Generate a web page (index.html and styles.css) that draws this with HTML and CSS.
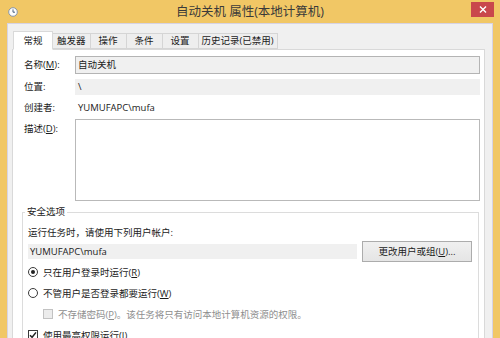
FILE: index.html
```html
<!DOCTYPE html>
<html>
<head>
<title>自动关机 属性(本地计算机)</title>
<link rel="stylesheet" href="styles.css">
</head>
<body>
<div class="window">
  <div class="titlebar">
    <svg class="app-icon" viewBox="0 0 10 10">
      <circle cx="5" cy="5" r="4.3" fill="#fdfdfd" stroke="#8795a8" stroke-width="1"/>
      <path d="M5 2.4V5.2H7" fill="none" stroke="#35506f" stroke-width="0.9"/>
    </svg>
    <div class="title">自动关机 属性(本地计算机)</div>
    <div class="close">
      <svg viewBox="0 0 8 7" width="8" height="7">
        <path d="M1 0.5L7 6.5M7 0.5L1 6.5" stroke="#fff" stroke-width="1.4"/>
      </svg>
    </div>
  </div>

  <div class="client">
    <div class="tabs">
      <div class="tab active">常规</div>
      <div class="tab">触发器</div>
      <div class="tab">操作</div>
      <div class="tab">条件</div>
      <div class="tab">设置</div>
      <div class="tab wide">历史记录(已禁用)</div>
    </div>

    <div class="panel">
      <div class="row">
        <span class="label">名称(<u>M</u>):</span>
        <div class="textbox">自动关机</div>
      </div>
      <div class="row row-gap">
        <span class="label">位置:</span>
        <div class="field">\</div>
      </div>
      <div class="row row-gap">
        <span class="label">创建者:</span>
        <div class="value">YUMUFAPC\mufa</div>
      </div>
      <div class="row row-desc">
        <span class="label">描述(<u>D</u>):</span>
        <div class="textarea"></div>
      </div>

      <fieldset class="group">
        <legend>安全选项</legend>
        <div class="intro">运行任务时，请使用下列用户帐户:</div>
        <div class="account">
          <div class="account-field">YUMUFAPC\mufa</div>
          <div class="btn">更改用户或组(<u>U</u>)...</div>
        </div>
        <div class="option">
          <span class="radio on"></span>
          <span>只在用户登录时运行(<u>R</u>)</span>
        </div>
        <div class="option">
          <span class="radio"></span>
          <span>不管用户是否登录都要运行(<u>W</u>)</span>
        </div>
        <div class="option sub disabled">
          <span class="check"></span>
          <span>不存储密码(<u>P</u>)。该任务将只有访问本地计算机资源的权限。</span>
        </div>
        <div class="option">
          <span class="check">
            <svg viewBox="0 0 8 8" width="8" height="8">
              <path d="M1 4.2L3.1 6.3L7 1.4" fill="none" stroke="#222" stroke-width="1.5"/>
            </svg>
          </span>
          <span>使用最高权限运行(<u>I</u>)</span>
        </div>
      </fieldset>
    </div>
  </div>
</div>
</body>
</html>
```

FILE: styles.css
```css
* {
  box-sizing: border-box;
}
body {
  margin: 0;
  font-family: "Open Sans", "Noto Sans CJK SC", sans-serif;
  font-size: 9.5px;
  color: #1b1b1b;
}
.window {
  width: 500px;
  height: 338px;
  background-color: #f1c765;
  display: flex;
  flex-direction: column;
  overflow: hidden;
}
.titlebar {
  height: 23px;
  flex: none;
  display: grid;
  grid-template-columns: 1fr auto 1fr;
  align-items: start;
}
.app-icon {
  width: 10px;
  height: 10px;
  margin: 7px 0 0 8px;
}
.title {
  font-size: 12.5px;
  line-height: 16px;
  padding-top: 4px;
  color: #3a3a3a;
}
.close {
  justify-self: end;
  width: 23px;
  height: 15px;
  margin: 2px 6px 0 0;
  background-color: #c9474c;
  display: flex;
  align-items: center;
  justify-content: center;
}
.client {
  flex: 1;
  margin: 0 7px;
  border: 1px solid #d7d3e3;
  border-bottom: none;
  background-color: #f0f0f0;
  padding: 7px 7px 0 4px;
  display: flex;
  flex-direction: column;
}
.tabs {
  display: flex;
  align-items: flex-end;
  padding-left: 1px;
}
.tab {
  height: 16px;
  line-height: 14px;
  min-width: 37px;
  padding: 0 4px;
  margin-left: -1px;
  text-align: center;
  background-color: #eeeeee;
  border: 1px solid #d5d5d5;
}
.tab.active {
  height: 19px;
  line-height: 17px;
  min-width: 40px;
  margin-left: 0;
  margin-bottom: -1px;
  background-color: #fff;
  border-color: #d9d9d9;
  border-bottom-color: #fff;
  position: relative;
  z-index: 1;
}
.tab.wide {
  padding: 0 3px;
}
.panel {
  flex: 1;
  background-color: #fff;
  border: 1px solid #d9d9d9;
  border-bottom: none;
  padding: 6px 4px 0 11px;
}
.row {
  display: flex;
  align-items: center;
}
.row-gap {
  margin-top: 5px;
}
.label {
  width: 51px;
  flex: none;
  line-height: 16px;
}
.textbox {
  flex: 1;
  height: 18px;
  line-height: 16px;
  padding: 0 2px;
  border: 1px solid #b4b4b4;
  background-color: #f0f0f0;
}
.field {
  flex: 1;
  height: 16px;
  line-height: 16px;
  padding: 0 3px;
  background-color: #f0f0f0;
}
.value {
  line-height: 16px;
  padding-left: 3px;
}
.row-desc {
  margin-top: 3px;
  align-items: flex-start;
}
.row-desc .label {
  padding-top: 2px;
}
.textarea {
  flex: 1;
  height: 82px;
  border: 1px solid #b9b9b9;
  background-color: #fff;
}
.group {
  margin: 4px 1px 0 -2px;
  padding: 6px 6px 20px 5px;
  border: 1px solid #dcdcdc;
  min-width: 0;
}
.group legend {
  padding: 0 2px;
  margin-left: -3px;
  line-height: 14px;
}
.intro {
  line-height: 16px;
}
.account {
  display: flex;
  align-items: center;
  gap: 5px;
  height: 21px;
}
.account-field {
  flex: 1;
  height: 15px;
  line-height: 15px;
  padding-left: 2px;
  background-color: #f0f0f0;
}
.btn {
  width: 110px;
  height: 21px;
  line-height: 19px;
  text-align: center;
  border: 1px solid #acacac;
  background: linear-gradient(#f0f0f0, #e5e5e5);
}
.option {
  display: flex;
  align-items: center;
  height: 20px;
  margin-top: 1px;
}
.account + .option {
  margin-top: 0;
}
.radio {
  width: 10px;
  height: 10px;
  margin-right: 5px;
  border: 1px solid #3a3a3a;
  border-radius: 50%;
  background-color: #fff;
  display: flex;
  align-items: center;
  justify-content: center;
}
.radio.on::after {
  content: "";
  width: 4px;
  height: 4px;
  border-radius: 50%;
  background-color: #222;
}
.check {
  width: 10px;
  height: 10px;
  margin-right: 5px;
  border: 1px solid #3a3a3a;
  background-color: #fff;
  display: flex;
  align-items: center;
  justify-content: center;
}
.option.sub {
  margin-left: 15px;
}
.option.disabled {
  color: #8e8e8e;
}
.option.disabled .check {
  border-color: #c2c2c2;
  background-color: #ececec;
}
```
